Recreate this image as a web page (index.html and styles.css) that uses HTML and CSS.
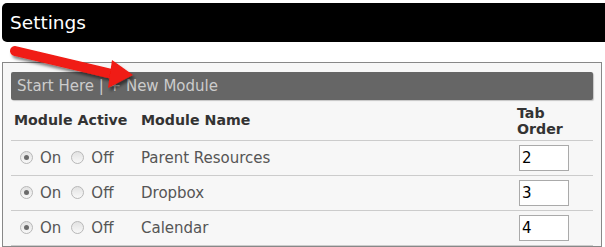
FILE: index.html
```html
<!DOCTYPE html>
<html lang="en">
<head>
    <meta charset="UTF-8">
    <title>Settings</title>
    <link rel="stylesheet" href="styles.css">
</head>
<body>
    <header class="title-bar">
        <h1>Settings</h1>
    </header>

    <div class="panel">
        <div class="toolbar">Start Here | + New Module</div>

        <table class="modules">
            <thead>
                <tr>
                    <th class="col-active">Module Active</th>
                    <th class="col-name">Module Name</th>
                    <th class="col-order">Tab<br>Order</th>
                </tr>
            </thead>
            <tbody>
                <tr>
                    <td class="col-active"><span class="radio checked"></span><span class="opt">On</span><span class="radio"></span><span class="opt">Off</span></td>
                    <td class="col-name">Parent Resources</td>
                    <td class="col-order"><input class="order-input" type="text" value="2"></td>
                </tr>
                <tr>
                    <td class="col-active"><span class="radio checked"></span><span class="opt">On</span><span class="radio"></span><span class="opt">Off</span></td>
                    <td class="col-name">Dropbox</td>
                    <td class="col-order"><input class="order-input" type="text" value="3"></td>
                </tr>
                <tr>
                    <td class="col-active"><span class="radio checked"></span><span class="opt">On</span><span class="radio"></span><span class="opt">Off</span></td>
                    <td class="col-name">Calendar</td>
                    <td class="col-order"><input class="order-input" type="text" value="4"></td>
                </tr>
            </tbody>
        </table>
    </div>

    <!-- annotation arrow drawn over the page -->
    <svg class="arrow" width="150" height="100" viewBox="0 0 150 100">
        <defs>
            <filter id="shadow" x="-20%" y="-20%" width="150%" height="150%">
                <feDropShadow dx="2" dy="3" stdDeviation="1.5" flood-color="#000" flood-opacity="0.5"/>
            </filter>
        </defs>
        <g filter="url(#shadow)" fill="#f01a12">
            <line x1="15" y1="51" x2="112" y2="74" stroke="#f01a12" stroke-width="10" stroke-linecap="round"/>
            <polygon points="112,60 133,75 108,88"/>
        </g>
    </svg>
</body>
</html>
```

FILE: styles.css
```css
body {
    margin: 0;
    padding: 0;
    background: #fff;
    font-family: 'DejaVu Sans', Verdana, sans-serif;
    color: #555;
    position: relative;
}

.title-bar {
    margin: 3px 0 0 2px;
    height: 39px;
    background: #000;
    border-radius: 5px 0 0 5px;
    display: flex;
    align-items: center;
    padding-left: 8px;
}

.title-bar h1 {
    margin: 0;
    font-size: 18.5px;
    font-weight: normal;
    color: #fff;
}

.panel {
    margin: 20px 0 0 2px;
    width: 582px;
    border: 1px solid #888;
    background: #f7f7f7;
    padding: 9px 8px 0;
}

.toolbar {
    height: 28px;
    line-height: 28px;
    background: #666;
    border-radius: 2px;
    padding-left: 6px;
    font-size: 15px;
    color: #ccc;
    box-shadow: 1px 1px 1px rgba(0, 0, 0, 0.2);
}

.modules {
    width: 100%;
    border-collapse: collapse;
    font-size: 15px;
}

.modules th {
    text-align: left;
    color: #333;
    font-size: 14.2px;
    font-weight: bold;
    height: 38px;
    padding: 0 0 0 3px;
    border-bottom: 1px solid #ccc;
    vertical-align: middle;
}

.modules th.col-order {
    line-height: 16px;
    padding-top: 2px;
}

.modules td {
    height: 34px;
    padding: 0 0 0 3px;
    border-bottom: 1px solid #ccc;
    vertical-align: middle;
}

.col-active {
    width: 124px;
}

.col-order {
    width: 76px;
}

.modules td.col-active {
    padding-left: 9px;
    width: 118px;
}

.radio {
    display: inline-block;
    width: 11px;
    height: 11px;
    border: 1px solid #b8b8b8;
    border-radius: 50%;
    background: linear-gradient(#e2e2e2, #f8f8f8);
    vertical-align: -1px;
    margin-right: 7px;
    position: relative;
}

.radio.checked::after {
    content: '';
    position: absolute;
    left: 3px;
    top: 3px;
    width: 5px;
    height: 5px;
    border-radius: 50%;
    background: #6b6b6b;
}

.opt {
    margin-right: 10px;
}

.order-input {
    width: 44px;
    height: 22px;
    margin-left: 2px;
    padding: 1px 2px;
    border: 1px solid #aaa;
    background: #fff;
    font-family: 'DejaVu Sans', Verdana, sans-serif;
    font-size: 15px;
    color: #000;
}

.arrow {
    position: absolute;
    left: 0;
    top: 0;
    pointer-events: none;
}
```
